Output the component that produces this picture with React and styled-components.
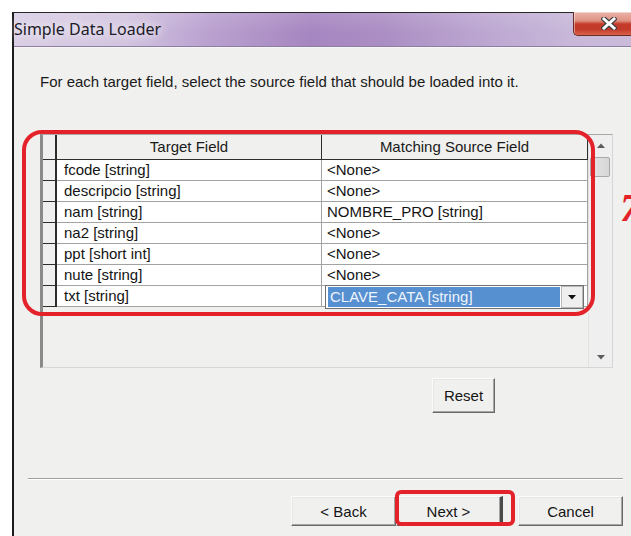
import React from 'react';
import styled, { createGlobalStyle } from 'styled-components';

const GlobalStyle = createGlobalStyle`
  html, body {
    margin: 0;
    padding: 0;
    background: #ffffff;
  }
  body {
    width: 631px;
    height: 536px;
    overflow: hidden;
    font-family: "Liberation Sans", Arial, sans-serif;
  }
`;

const Page = styled.div`
  width: 631px;
  height: 536px;
  overflow: hidden;
  box-sizing: border-box;
  padding: 12px 0 0 12px;
`;

const Window = styled.div`
  width: 619px;
  height: 524px;
  box-sizing: border-box;
  border-left: 2px solid #1c1c1c;
  border-top: 1px solid #262626;
  display: flex;
  flex-direction: column;
  background: #f0f0ef;
`;

const TitleBar = styled.div`
  height: 34px;
  box-sizing: border-box;
  display: flex;
  align-items: flex-start;
  border-bottom: 1px solid #8d7d9e;
  background:
    linear-gradient(to bottom, rgba(255, 255, 255, 0.12), rgba(255, 255, 255, 0) 60%),
    linear-gradient(
      to right,
      #d9cee5 0%,
      #d2c4e0 18%,
      #b9a0cf 32%,
      #a686c0 48%,
      #ab8ec4 60%,
      #bba5d0 75%,
      #c8b7d9 90%,
      #cbbbdb 100%
    );
`;

const Caption = styled.span`
  flex: 1;
  font-family: "Noto Sans", "Open Sans", sans-serif;
  font-size: 16px;
  line-height: 33px;
  color: #1c1b28;
  text-shadow: 0 0 8px rgba(255, 255, 255, 0.95), 0 0 16px rgba(255, 255, 255, 0.8);
`;

const CloseButton = styled.div`
  width: 58px;
  height: 24px;
  margin-top: -1px;
  box-sizing: border-box;
  border-left: 1px solid #6b2a24;
  border-bottom: 1px solid #6b2a24;
  border-bottom-left-radius: 5px;
  display: flex;
  align-items: center;
  padding-left: 27px;
  background: linear-gradient(
    to bottom,
    #eab4a8 0%,
    #df9282 38%,
    #c53b29 52%,
    #c2392a 75%,
    #d9634a 100%
  );
  box-shadow: inset 1px 1px 0 rgba(255, 255, 255, 0.45);
`;

const Content = styled.div`
  flex: 1;
  display: flex;
  flex-direction: column;
  border-top: 1px solid #f7f7f7;
`;

const Main = styled.div`
  display: flex;
  flex-direction: column;
  align-items: flex-start;
  padding: 25px 0 0 26px;
`;

const Instruction = styled.div`
  font-size: 15px;
  line-height: 18px;
  color: #1a1a1a;
`;

const GridWrap = styled.div`
  position: relative;
  margin-top: 43px;
`;

const Grid = styled.div`
  width: 573px;
  height: 234px;
  box-sizing: border-box;
  display: flex;
  border-top: 1px solid #a9a9a9;
  border-left: 3px solid #8a8a8a;
  border-right: 1px solid #d6d6d6;
  border-bottom: 1px solid #d6d6d6;
  background: #f0f0ef;
`;

const Table = styled.div`
  width: 545px;
  display: grid;
  grid-template-columns: 14px 265px 266px;
  grid-template-rows: 25px;
  grid-auto-rows: 21px;
  align-content: start;
`;

const RowHead = styled.div`
  box-sizing: border-box;
  background: #efefef;
  border-right: 2px solid #2c2c2c;
  border-bottom: 1px solid #2c2c2c;
`;

const HeadCell = styled.div`
  box-sizing: border-box;
  background: #f0f0ef;
  border-right: 1px solid #2e2e2e;
  border-bottom: 1px solid #2e2e2e;
  text-align: center;
  font-size: 15px;
  line-height: 24px;
  color: #1a1a1a;
`;

const Cell = styled.div`
  box-sizing: border-box;
  background: #ffffff;
  border-right: 1px solid #a3a3a3;
  border-bottom: 1px solid #a3a3a3;
  padding-left: ${(p) => p.$pad}px;
  font-size: 15px;
  line-height: 20px;
  color: #141414;
  white-space: nowrap;
  overflow: ${(p) => (p.$editing ? 'visible' : 'hidden')};
`;

const Combo = styled.div`
  position: relative;
  height: 24px;
  margin: -1px 3px 0 3px;
  box-sizing: border-box;
  display: flex;
  border: 1px solid #707070;
  background: #ffffff;
`;

const ComboValue = styled.div`
  flex: 1;
  margin: 1px 1px 1px 2px;
  padding-left: 2px;
  background: #5790d0;
  color: #eef4fc;
  font-size: 15px;
  line-height: 20px;
`;

const ComboButton = styled.div`
  width: 22px;
  box-sizing: border-box;
  background: #efefef;
  border: 1px solid #b9b9b9;
  display: flex;
  align-items: center;
  justify-content: center;
`;

const ScrollBar = styled.div`
  width: 24px;
  box-sizing: border-box;
  border-left: 1px solid #e2e2e2;
  background: #efefef;
  display: flex;
  flex-direction: column;
`;

const ScrollArrow = styled.div`
  height: 20px;
  display: flex;
  align-items: center;
  justify-content: center;
`;

const Thumb = styled.div`
  height: 20px;
  margin: 2px 2px 0 1px;
  box-sizing: border-box;
  border: 1px solid #a8a8a8;
  border-radius: 2px;
  background: linear-gradient(to right, #e4e4e4, #d6d6d6);
`;

const Track = styled.div`
  flex: 1;
`;

const Ring = styled.div`
  position: absolute;
  box-sizing: border-box;
  border: 4px solid #e4222a;
  pointer-events: none;
`;

const GridRing = styled(Ring)`
  left: -18px;
  top: -4px;
  width: 573px;
  height: 186px;
  border-radius: 20px;
`;

const StepNumber = styled.div`
  position: absolute;
  left: 580px;
  top: 54px;
  font-family: "Liberation Serif", "Times New Roman", serif;
  font-style: italic;
  font-weight: bold;
  font-size: 40px;
  line-height: 40px;
  color: #e4222a;
`;

const ResetRow = styled.div`
  margin: 10px 0 0 392px;
`;

const Button = styled.button`
  width: ${(p) => p.$w || 105}px;
  height: ${(p) => p.$h || 30}px;
  box-sizing: border-box;
  padding: 0;
  font-family: "Liberation Sans", Arial, sans-serif;
  font-size: 15px;
  color: #141414;
  background: #f0f0ef;
  border: 1px solid;
  border-color: #fbfbfb #6a6a6a #6a6a6a #fbfbfb;
  border-right-width: ${(p) => (p.$default ? 3 : 1)}px;
  border-right-color: ${(p) => (p.$default ? '#4a4a4a' : '#6a6a6a')};
  box-shadow: inset -1px -1px 0 #a5a5a5, inset 1px 1px 0 #e6e6e6;
`;

const Separator = styled.div`
  margin: 65px 0 0 14px;
  width: 595px;
  border-top: 1px solid #a0a0a0;
  border-bottom: 1px solid #ffffff;
`;

const Footer = styled.div`
  display: flex;
  align-items: flex-start;
  margin: 16px 0 0 277px;
`;

const Spot = styled.div`
  position: relative;
  display: flex;
`;

const NextRing = styled(Ring)`
  left: -1px;
  top: -6px;
  width: 120px;
  height: 36px;
  border-radius: 6px;
`;

const Gap = styled.div`
  width: 15px;
`;

const CloseGlyph = () => (
  <svg width="16" height="13" viewBox="0 0 16 13">
    <path d="M3 2 L13 11 M13 2 L3 11" stroke="#3c3c44" strokeWidth="5.2" strokeLinecap="square" />
    <path d="M3 2 L13 11 M13 2 L3 11" stroke="#ffffff" strokeWidth="3" strokeLinecap="square" />
  </svg>
);

const Triangle = ({ up, color = '#5c5c5c' }) => (
  <svg width="8" height="5" viewBox="0 0 8 5">
    <path d={up ? 'M0 5 L4 0.5 L8 5 Z' : 'M0 0 L8 0 L4 4.5 Z'} fill={color} />
  </svg>
);

const rows = [
  ['fcode [string]', '<None>'],
  ['descripcio [string]', '<None>'],
  ['nam [string]', 'NOMBRE_PRO [string]'],
  ['na2 [string]', '<None>'],
  ['ppt [short int]', '<None>'],
  ['nute [string]', '<None>'],
  ['txt [string]', 'CLAVE_CATA [string]', true],
];

export default function App() {
  return (
    <Page>
      <GlobalStyle />
      <Window>
        <TitleBar>
          <Caption>Simple Data Loader</Caption>
          <CloseButton>
            <CloseGlyph />
          </CloseButton>
        </TitleBar>
        <Content>
          <Main>
            <Instruction>
              For each target field, select the source field that should be loaded into it.
            </Instruction>
            <GridWrap>
              <Grid>
                <Table>
                  <RowHead />
                  <HeadCell>Target Field</HeadCell>
                  <HeadCell>Matching Source Field</HeadCell>
                  {rows.map(([target, source, editing]) => (
                    <React.Fragment key={target}>
                      <RowHead />
                      <Cell $pad={7}>{target}</Cell>
                      {editing ? (
                        <Cell $pad={0} $editing>
                          <Combo>
                            <ComboValue>{source}</ComboValue>
                            <ComboButton>
                              <Triangle color="#111" />
                            </ComboButton>
                          </Combo>
                        </Cell>
                      ) : (
                        <Cell $pad={5}>{source}</Cell>
                      )}
                    </React.Fragment>
                  ))}
                </Table>
                <ScrollBar>
                  <ScrollArrow>
                    <Triangle up />
                  </ScrollArrow>
                  <Thumb />
                  <Track />
                  <ScrollArrow>
                    <Triangle />
                  </ScrollArrow>
                </ScrollBar>
              </Grid>
              <GridRing />
              <StepNumber>7</StepNumber>
            </GridWrap>
            <ResetRow>
              <Button $w={63} $h={35}>Reset</Button>
            </ResetRow>
          </Main>
          <Separator />
          <Footer>
            <Button>&lt; Back</Button>
            <Spot>
              <Button $w={107} $default>Next &gt;</Button>
              <NextRing />
            </Spot>
            <Gap />
            <Button>Cancel</Button>
          </Footer>
        </Content>
      </Window>
    </Page>
  );
}
